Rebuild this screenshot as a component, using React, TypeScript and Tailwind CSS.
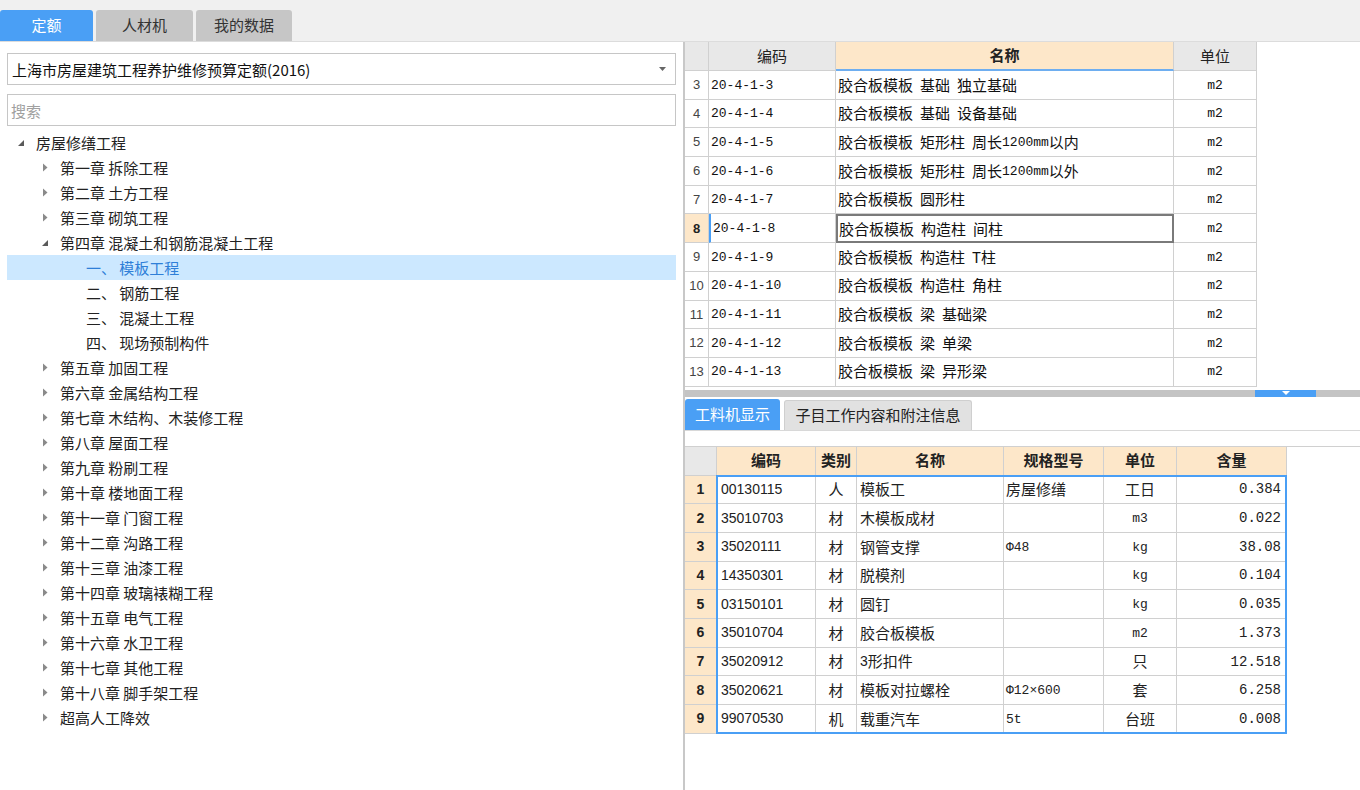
import React from "react";

const cjk = "font-['Noto_Sans_CJK_SC',sans-serif]";
const mono = "font-['Liberation_Mono','Noto_Sans_CJK_SC',monospace]";
const sans = "font-['Liberation_Sans','Noto_Sans_CJK_SC',sans-serif]";

type TreeNode = { label: string; level: number; state?: "open" | "closed" | "leaf"; selected?: boolean };

const tree: TreeNode[] = [
  { label: "房屋修缮工程", level: 0, state: "open" },
  { label: "第一章 拆除工程", level: 1, state: "closed" },
  { label: "第二章 土方工程", level: 1, state: "closed" },
  { label: "第三章 砌筑工程", level: 1, state: "closed" },
  { label: "第四章 混凝土和钢筋混凝土工程", level: 1, state: "open" },
  { label: "一、 模板工程", level: 2, state: "leaf", selected: true },
  { label: "二、 钢筋工程", level: 2, state: "leaf" },
  { label: "三、 混凝土工程", level: 2, state: "leaf" },
  { label: "四、 现场预制构件", level: 2, state: "leaf" },
  { label: "第五章 加固工程", level: 1, state: "closed" },
  { label: "第六章 金属结构工程", level: 1, state: "closed" },
  { label: "第七章 木结构、木装修工程", level: 1, state: "closed" },
  { label: "第八章 屋面工程", level: 1, state: "closed" },
  { label: "第九章 粉刷工程", level: 1, state: "closed" },
  { label: "第十章 楼地面工程", level: 1, state: "closed" },
  { label: "第十一章 门窗工程", level: 1, state: "closed" },
  { label: "第十二章 沟路工程", level: 1, state: "closed" },
  { label: "第十三章 油漆工程", level: 1, state: "closed" },
  { label: "第十四章 玻璃裱糊工程", level: 1, state: "closed" },
  { label: "第十五章 电气工程", level: 1, state: "closed" },
  { label: "第十六章 水卫工程", level: 1, state: "closed" },
  { label: "第十七章 其他工程", level: 1, state: "closed" },
  { label: "第十八章 脚手架工程", level: 1, state: "closed" },
  { label: "超高人工降效", level: 1, state: "closed" },
];

const quotas = [
  ["3", "20-4-1-3", "胶合板模板 基础 独立基础"],
  ["4", "20-4-1-4", "胶合板模板 基础 设备基础"],
  ["5", "20-4-1-5", "胶合板模板 矩形柱 周长1200mm以内"],
  ["6", "20-4-1-6", "胶合板模板 矩形柱 周长1200mm以外"],
  ["7", "20-4-1-7", "胶合板模板 圆形柱"],
  ["8", "20-4-1-8", "胶合板模板 构造柱 间柱"],
  ["9", "20-4-1-9", "胶合板模板 构造柱 T柱"],
  ["10", "20-4-1-10", "胶合板模板 构造柱 角柱"],
  ["11", "20-4-1-11", "胶合板模板 梁 基础梁"],
  ["12", "20-4-1-12", "胶合板模板 梁 单梁"],
  ["13", "20-4-1-13", "胶合板模板 梁 异形梁"],
];

const materials = [
  ["1", "00130115", "人", "模板工", "房屋修缮", "工日", "0.384"],
  ["2", "35010703", "材", "木模板成材", "", "m3", "0.022"],
  ["3", "35020111", "材", "钢管支撑", "Φ48", "kg", "38.08"],
  ["4", "14350301", "材", "脱模剂", "", "kg", "0.104"],
  ["5", "03150101", "材", "圆钉", "", "kg", "0.035"],
  ["6", "35010704", "材", "胶合板模板", "", "m2", "1.373"],
  ["7", "35020912", "材", "3形扣件", "", "只", "12.518"],
  ["8", "35020621", "材", "模板对拉螺栓", "Φ12×600", "套", "6.258"],
  ["9", "99070530", "机", "载重汽车", "5t", "台班", "0.008"],
];

const isAscii = (s: string) => /^[\x00-\x7f]*$/.test(s);

function Arrow({ state }: { state?: string }) {
  if (state === "open")
    return (
      <svg width="8" height="8" viewBox="0 0 8 8">
        <path d="M7 1 L7 7 L1 7 Z" fill="#5a5a5a" />
      </svg>
    );
  if (state === "closed")
    return (
      <svg width="8" height="9" viewBox="0 0 8 9">
        <path d="M2 0.5 L6.5 4.5 L2 8.5 Z" fill="#8a8a8a" />
      </svg>
    );
  return null;
}

function TreeRow({ node }: { node: TreeNode }) {
  const pad = node.level === 0 ? "pl-[10px]" : node.level === 1 ? "pl-[34px]" : "pl-[79px]";
  return (
    <div
      className={`h-[25px] flex items-center ${pad} ${
        node.selected ? "bg-[#cce8ff] text-[#2f7fd8]" : "text-[#222]"
      }`}
    >
      {node.state !== "leaf" && (
        <div className="w-[19px] flex justify-start">
          <Arrow state={node.state} />
        </div>
      )}
      <span className="text-[15px] leading-none whitespace-pre">{node.label}</span>
    </div>
  );
}

// quota names mix CJK with SimSun-like half-width latin and wide spaces
function QuotaName({ text }: { text: string }) {
  return (
    <>
      {text.split(/(\d+mm| )/).map((p, i) => {
        if (p === " ") return <span key={i} className="inline-block w-[7px]" />;
        if (p && isAscii(p))
          return (
            <span key={i} className={`${mono} text-[13px] relative top-[1px]`}>
              {p}
            </span>
          );
        return <span key={i}>{p}</span>;
      })}
    </>
  );
}

export default function App() {
  return (
    <div className={`w-[1360px] h-[790px] overflow-hidden bg-white flex flex-col ${cjk}`}>
      {/* top tabs */}
      <div className="h-[42px] bg-[#f0f0f0] border-b border-[#dcdcdc] flex items-end gap-[3px]">
        <div className="w-[93px] h-[31px] bg-[#4a9ff5] text-white rounded-t-[3px] flex items-center justify-center text-[15px]">
          定额
        </div>
        <div className="w-[97px] h-[31px] bg-[#c6c6c6] text-[#333] rounded-t-[3px] flex items-center justify-center text-[15px]">
          人材机
        </div>
        <div className="w-[96px] h-[31px] bg-[#c6c6c6] text-[#333] rounded-t-[3px] flex items-center justify-center text-[15px]">
          我的数据
        </div>
      </div>

      <div className="flex flex-1 min-h-0">
        {/* left panel */}
        <div className="w-[683px] px-[7px] pt-[11px] flex flex-col">
          <div className="h-[32px] border border-[#c6c6c6] flex items-center justify-between pl-[4px] pr-[9px]">
            <span className="text-[15px] leading-none text-[#111]">上海市房屋建筑工程养护维修预算定额(2016)</span>
            <svg width="7" height="4" viewBox="0 0 7 4">
              <path d="M0 0 H7 L3.5 4 Z" fill="#666" />
            </svg>
          </div>
          <div className="h-[32px] mt-[9px] border border-[#c6c6c6] flex items-center pl-[3px]">
            <span className="text-[15px] leading-none text-[#a0a0a0]">搜索</span>
          </div>
          <div className="mt-[4px] flex flex-col">
            {tree.map((n, i) => (
              <TreeRow key={i} node={n} />
            ))}
          </div>
        </div>

        <div className="w-[2px] bg-[#c8c8c8]" />

        {/* right panel */}
        <div className="flex-1 flex flex-col">
          {/* quota table */}
          <div className="flex flex-col">
            <div className="flex h-[29px]">
              <div className="w-[24px] bg-[#e8e8e8] border-r border-b border-[#d0d0d0]" />
              <div className="w-[127px] bg-[#e8e8e8] border-r border-b border-[#d0d0d0] flex items-center justify-center text-[15px] text-[#222]">
                编码
              </div>
              <div className="w-[338px] bg-[#fde7c9] border-r border-b-2 border-r-[#d0d0d0] border-b-[#6eaef0] flex items-center justify-center text-[15px] font-bold text-[#222]">
                名称
              </div>
              <div className="w-[83px] bg-[#e8e8e8] border-r border-b border-[#d0d0d0] flex items-center justify-center text-[15px] text-[#222]">
                单位
              </div>
            </div>
            {quotas.map((r) => {
              const sel = r[0] === "8";
              return (
                <div key={r[0]} className="flex h-[28.7px]">
                  <div
                    className={`w-[24px] border-r border-b border-[#d0d0d0] flex items-center justify-center text-[13px] ${sans} ${
                      sel ? "bg-[#fde7c9] font-bold text-[#222]" : "text-[#444]"
                    }`}
                  >
                    {r[0]}
                  </div>
                  <div
                    className={`w-[127px] border-r border-b border-[#d0d0d0] flex items-center pl-[2px] pt-[1px] text-[13px] text-[#111] ${mono} ${
                      sel ? "border-l-2 border-l-[#4a9ff5]" : ""
                    }`}
                  >
                    {r[1]}
                  </div>
                  <div
                    className={`w-[338px] flex items-center whitespace-pre text-[15px] text-[#111] ${
                      sel ? "border-2 border-[#7a7a7a] pl-[1px]" : "border-r border-b border-[#d0d0d0] pl-[2px]"
                    }`}
                  >
                    <QuotaName text={r[2]} />
                  </div>
                  <div className={`w-[83px] border-r border-b border-[#d0d0d0] flex items-center justify-center pt-[1px] text-[13px] text-[#111] ${mono}`}>
                    m2
                  </div>
                </div>
              );
            })}
          </div>

          <div className="h-[3px]" />
          <div className="h-[7px] bg-[#c4c4c4] flex pl-[570px]">
            <div className="w-[61px] bg-[#4a9ff5] flex justify-center pt-[1px]">
              <svg width="8" height="4" viewBox="0 0 8 4">
                <path d="M0 0 H8 L4 4 Z" fill="#fff" />
              </svg>
            </div>
          </div>

          {/* lower tabs */}
          <div className="h-[34px] flex items-end gap-[4px] border-b border-[#d8d8d8]">
            <div className="w-[95px] h-[31px] bg-[#4a9ff5] text-white rounded-t-[3px] flex items-center justify-center text-[15px]">
              工料机显示
            </div>
            <div className="w-[188px] h-[30px] bg-[#e1e1e1] border border-b-0 border-[#cfcfcf] text-[#222] rounded-t-[3px] flex items-center justify-center text-[15px]">
              子目工作内容和附注信息
            </div>
          </div>
          <div className="h-[16px] border-b border-[#d0d0d0]" />

          {/* material table */}
          <div className="flex h-[29px]">
            <div className="w-[32px] bg-[#e8e8e8] border-r border-b border-[#d0d0d0]" />
            {[
              ["编码", "w-[99px]"],
              ["类别", "w-[41px]"],
              ["名称", "w-[147px]"],
              ["规格型号", "w-[100px]"],
              ["单位", "w-[73px]"],
              ["含量", "w-[110px]"],
            ].map(([t, w]) => (
              <div
                key={t}
                className={`${w} bg-[#fde7c9] border-r border-b border-[#d0d0d0] flex items-center justify-center text-[15px] font-bold text-[#222]`}
              >
                {t}
              </div>
            ))}
          </div>
          <div className="relative flex flex-col w-[602px]">
            {materials.map((r) => (
              <div key={r[0]} className="flex h-[28.7px]">
                <div className={`w-[32px] bg-[#fde7c9] border-r border-b border-[#d0d0d0] flex items-center justify-center text-[14px] font-bold text-[#222] ${sans}`}>
                  {r[0]}
                </div>
                <div className={`w-[99px] border-r border-b border-[#d0d0d0] flex items-center pl-[4px] text-[14px] text-[#222] ${sans}`}>
                  {r[1]}
                </div>
                <div className="w-[41px] border-r border-b border-[#d0d0d0] flex items-center justify-center text-[15px] text-[#222]">
                  {r[2]}
                </div>
                <div className="w-[147px] border-r border-b border-[#d0d0d0] flex items-center pl-[3px] text-[15px] text-[#222] whitespace-pre">
                  {r[3].split(/^(\d)/).map((p, i) =>
                    /^\d$/.test(p) ? (
                      <span key={i} className={`${sans} text-[14px]`}>
                        {p}
                      </span>
                    ) : (
                      <span key={i}>{p}</span>
                    )
                  )}
                </div>
                <div
                  className={`w-[100px] border-r border-b border-[#d0d0d0] flex items-center pl-[2px] text-[#222] ${
                    isAscii(r[4].replace("Φ", "").replace("×", "")) && r[4] ? `${mono} text-[13px] pt-[1px]` : "text-[15px]"
                  }`}
                >
                  {r[4]}
                </div>
                <div
                  className={`w-[73px] border-r border-b border-[#d0d0d0] flex items-center justify-center text-[#222] ${
                    isAscii(r[5]) ? `${mono} text-[13px] pt-[1px]` : "text-[15px]"
                  }`}
                >
                  {r[5]}
                </div>
                <div className={`w-[110px] border-r border-b border-[#d0d0d0] flex items-center justify-end pr-[5px] pt-[1px] text-[14px] text-[#222] ${mono}`}>
                  {r[6]}
                </div>
              </div>
            ))}
            <div className="absolute left-[31px] right-0 top-[-1px] bottom-0 border-2 border-[#4a9ff5] pointer-events-none" />
          </div>
        </div>
      </div>
    </div>
  );
}
